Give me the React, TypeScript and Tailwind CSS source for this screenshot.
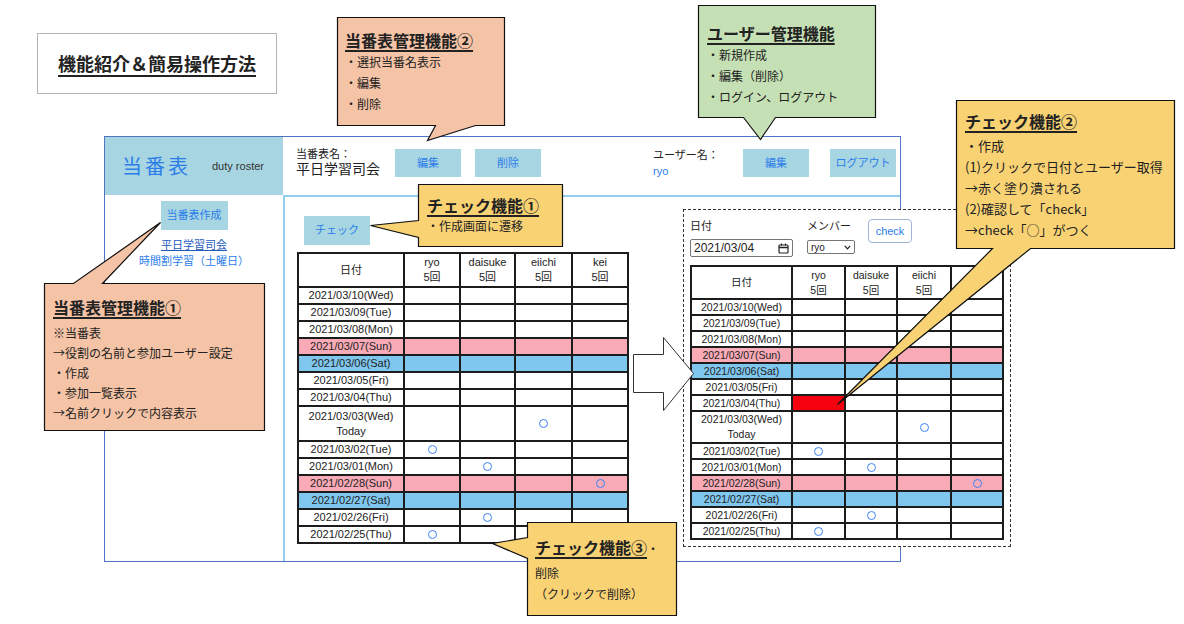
import React from "react";

type Side = "top" | "bottom" | "left";

function Bubble({
  box,
  side,
  base,
  tip,
  fill,
  className,
  children,
}: {
  box: [number, number, number, number];
  side: Side;
  base: [number, number];
  tip: [number, number];
  fill: string;
  className: string;
  children: React.ReactNode;
}) {
  const [x1, y1, x2, y2] = box;
  let d = "";
  if (side === "bottom") {
    d = `M${x1},${y1} L${x2},${y1} L${x2},${y2} L${base[0]},${y2} L${tip[0]},${tip[1]} L${base[1]},${y2} L${x1},${y2} Z`;
  } else if (side === "top") {
    d = `M${x1},${y1} L${base[0]},${y1} L${tip[0]},${tip[1]} L${base[1]},${y1} L${x2},${y1} L${x2},${y2} L${x1},${y2} Z`;
  } else {
    d = `M${x1},${y1} L${x2},${y1} L${x2},${y2} L${x1},${y2} L${x1},${base[0]} L${tip[0]},${tip[1]} L${x1},${base[1]} Z`;
  }
  return (
    <>
      <svg className="absolute left-0 top-0 pointer-events-none" width={1184} height={624}>
        <g transform="translate(0.5,0.5)">
          <path d={d} fill={fill} stroke="#111" strokeWidth={1.2} strokeLinejoin="miter" />
        </g>
      </svg>
      <div className={"absolute text-[#222] " + className}>{children}</div>
    </>
  );
}

type Row = { d: string; c?: "pink" | "blue"; today?: boolean; marks?: number[] };

const rows: Row[] = [
  { d: "2021/03/10(Wed)" },
  { d: "2021/03/09(Tue)" },
  { d: "2021/03/08(Mon)" },
  { d: "2021/03/07(Sun)", c: "pink" },
  { d: "2021/03/06(Sat)", c: "blue" },
  { d: "2021/03/05(Fri)" },
  { d: "2021/03/04(Thu)" },
  { d: "2021/03/03(Wed)", today: true, marks: [2] },
  { d: "2021/03/02(Tue)", marks: [0] },
  { d: "2021/03/01(Mon)", marks: [1] },
  { d: "2021/02/28(Sun)", c: "pink", marks: [3] },
  { d: "2021/02/27(Sat)", c: "blue" },
  { d: "2021/02/26(Fri)", marks: [1] },
  { d: "2021/02/25(Thu)", marks: [0] },
];

function Mark() {
  return <div className="w-[9px] h-[9px] rounded-full border-[1.5px] border-[#3b82f6]" />;
}

function Roster({
  gridCls,
  headH,
  rowH,
  todayH,
  text,
  names,
  redCell,
}: {
  gridCls: string;
  headH: string;
  rowH: string;
  todayH: string;
  text: string;
  names: string[];
  redCell?: boolean;
}) {
  const bgOf = (r: Row) =>
    r.c === "pink" ? "bg-[#f8aab6]" : r.c === "blue" ? "bg-[#80c7ef]" : "bg-white";
  return (
    <div className={"grid w-max bg-[#1c1c1c] p-[2px] gap-[2px] " + gridCls + " " + text}>
      <div className={"bg-white flex items-center justify-center " + headH}>日付</div>
      {names.map((n, i) => (
        <div key={i} className={"bg-white flex flex-col items-center justify-center leading-[15px] " + headH}>
          {n && <span>{n}</span>}
          {n && <span>5回</span>}
        </div>
      ))}
      {rows.map((r, ri) => (
        <React.Fragment key={ri}>
          <div
            className={
              "flex flex-col items-center justify-center leading-[15px] " +
              bgOf(r) +
              " " +
              (r.today ? todayH : rowH)
            }
          >
            <span>{r.d}</span>
            {r.today && <span>Today</span>}
          </div>
          {[0, 1, 2, 3].map((ci) => {
            const red = redCell && ri === 6 && ci === 0;
            return (
              <div
                key={ci}
                className={
                  "flex items-center justify-center " +
                  (red ? "bg-[#f5000f]" : bgOf(r)) +
                  " " +
                  (r.today ? todayH : rowH)
                }
              >
                {r.marks?.includes(ci) && <Mark />}
              </div>
            );
          })}
        </React.Fragment>
      ))}
    </div>
  );
}

const appBtn =
  "bg-[#a8d5e2] text-[#2b7de9] text-[11px] flex items-center justify-center";

export default function App() {
  return (
    <div className="relative w-[1184px] h-[624px] overflow-hidden bg-white text-[#222] font-['Liberation_Sans','Noto_Sans_CJK_JP',sans-serif]">
      {/* Title box */}
      <div className="absolute left-[37px] top-[33px] w-[240px] h-[61px] border border-[#b4b4b4] flex items-center justify-center">
        <span className="text-[18px] font-bold underline decoration-[2px] underline-offset-[4px] font-['Noto_Sans_CJK_JP',sans-serif]">
          機能紹介＆簡易操作方法
        </span>
      </div>

      {/* App mock frame */}
      <div className="absolute left-[104px] top-[136px] w-[797px] h-[426px] border border-[#4f74c4] bg-white flex flex-col">
        <div className="h-[58px] flex shrink-0">
          <div className="w-[178px] bg-[#a8d5e2] flex items-center pl-[17px]">
            <span className="text-[20px] tracking-[3px] text-[#2b7de9] font-['Noto_Sans_CJK_JP',sans-serif]">当番表</span>
            <span className="ml-[21px] text-[11px] text-[#333]">duty roster</span>
          </div>
          <div className="flex-1 flex items-start pl-[13px] pr-[4px]">
            <div className="w-[99px] mt-[10px]">
              <div className="text-[11px] leading-[14px]">当番表名：</div>
              <div className="text-[14px] leading-[16px]">平日学習司会</div>
            </div>
            <div className={appBtn + " w-[66px] h-[28px] mt-[12px]"}>編集</div>
            <div className={appBtn + " w-[66px] h-[28px] mt-[12px] ml-[14px]"}>削除</div>
            <div className="ml-auto w-[90px] mt-[11px]">
              <div className="text-[11px] leading-[14px]">ユーザー名：</div>
              <div className="text-[11px] leading-[14px] mt-[2px] text-[#2b7de9]">ryo</div>
            </div>
            <div className={appBtn + " w-[66px] h-[28px] mt-[12px]"}>編集</div>
            <div className={appBtn + " w-[66px] h-[28px] mt-[12px] ml-[21px]"}>ログアウト</div>
          </div>
        </div>
        <div className="flex-1 flex">
          <div className="w-[178px] flex flex-col items-center">
            <div className={appBtn + " w-[67px] h-[29px] mt-[6px]"}>当番表作成</div>
            <div className="mt-[7px] text-[11px] leading-[16px] text-[#2559b8] underline">平日学習司会</div>
            <div className="text-[11px] leading-[16px] text-[#2b7de9]">時間割学習（土曜日）</div>
          </div>
          <div className="flex-1 border-l-2 border-t-2 border-[#93cdf2] flex flex-col items-start">
            <div className={appBtn + " w-[66px] h-[29px] mt-[19px] ml-[19px]"}>チェック</div>
            <div className="mt-[7px] ml-[12px]">
              <Roster
                gridCls="grid-cols-[104px_54px_53px_55px_54px]"
                headH="h-[32px]"
                rowH="h-[15px]"
                todayH="h-[33px]"
                text="text-[11px]"
                names={["ryo", "daisuke", "eiichi", "kei"]}
              />
            </div>
          </div>
        </div>
      </div>

      {/* Right panel: check screen */}
      <div className="absolute left-[683px] top-[209px] w-[328px] h-[338px] border border-dashed border-[#333] bg-white pl-[6px]">
        <div className="flex items-start">
          <div className="flex flex-col">
            <div className="mt-[9px] text-[11px] leading-[14px]">日付</div>
            <div className="mt-[6px] w-[103px] h-[18px] border border-[#767676] rounded-[2px] flex items-center justify-between px-[3px] text-[12px]">
              <span>2021/03/04</span>
              <svg width="11" height="11" viewBox="0 0 11 11">
                <rect x="1" y="2" width="9" height="8" rx="1" fill="none" stroke="#222" strokeWidth="1.2" />
                <line x1="1" y1="4.5" x2="10" y2="4.5" stroke="#222" strokeWidth="1.5" />
                <line x1="3.5" y1="0.5" x2="3.5" y2="2.5" stroke="#222" strokeWidth="1.2" />
                <line x1="7.5" y1="0.5" x2="7.5" y2="2.5" stroke="#222" strokeWidth="1.2" />
              </svg>
            </div>
          </div>
          <div className="flex flex-col ml-[14px]">
            <div className="mt-[9px] text-[11px] leading-[14px]">メンバー</div>
            <div className="mt-[7px] w-[48px] h-[14px] border border-[#767676] rounded-[2px] flex items-center justify-between px-[3px] text-[10px]">
              <span>ryo</span>
              <svg width="7" height="5" viewBox="0 0 7 5">
                <path d="M0.8 0.8 L3.5 3.8 L6.2 0.8" fill="none" stroke="#222" strokeWidth="1.2" />
              </svg>
            </div>
          </div>
          <div className="ml-[13px] mt-[9px] w-[44px] h-[24px] border border-[#9fb5d6] rounded-[4px] flex items-center justify-center text-[11px] text-[#2b7de9]">
            check
          </div>
        </div>
        <div className="mt-[8px]">
          <Roster
            gridCls="grid-cols-[99px_51px_50px_52px_50px]"
            headH="h-[31px]"
            rowH="h-[14px]"
            todayH="h-[30px]"
            text="text-[10.5px]"
            names={["ryo", "daisuke", "eiichi", ""]}
            redCell
          />
        </div>
      </div>

      {/* Big arrow */}
      <svg className="absolute left-0 top-0 pointer-events-none" width={1184} height={624}>
        <path
          d="M633.5,354.5 L663.5,354.5 L663.5,337.5 L693.5,373.5 L663.5,410.5 L663.5,392.5 L633.5,392.5 Z"
          fill="#fff"
          stroke="#333"
          strokeWidth={1}
        />
      </svg>

      {/* Callouts */}
      <Bubble
        box={[337, 17, 504, 125]}
        side="bottom"
        base={[475, 435]}
        tip={[427, 140]}
        fill="#f5c3a6"
        className="left-[337px] top-[17px] w-[167px] h-[108px] pl-[8px] pt-[12px] font-['Noto_Sans_CJK_JP',sans-serif]"
      >
        <div className="text-[16px] leading-[22px] font-bold underline decoration-[1.5px] underline-offset-[3px]">当番表管理機能②</div>
        <div className="text-[12px] leading-[21px]">・選択当番名表示</div>
        <div className="text-[12px] leading-[21px]">・編集</div>
        <div className="text-[12px] leading-[21px]">・削除</div>
      </Bubble>

      <Bubble
        box={[698, 5, 875, 117]}
        side="bottom"
        base={[775, 743]}
        tip={[760, 139]}
        fill="#c5e0b4"
        className="left-[698px] top-[5px] w-[177px] h-[112px] pl-[9px] pt-[17px] font-['Noto_Sans_CJK_JP',sans-serif]"
      >
        <div className="text-[16px] leading-[22px] font-bold underline decoration-[1.5px] underline-offset-[3px]">ユーザー管理機能</div>
        <div className="text-[12px] leading-[21px]">・新規作成</div>
        <div className="text-[12px] leading-[21px]">・編集（削除）</div>
        <div className="text-[12px] leading-[21px]">・ログイン、ログアウト</div>
      </Bubble>

      <Bubble
        box={[44, 283, 264, 430]}
        side="top"
        base={[73, 102]}
        tip={[160, 222]}
        fill="#f5c3a6"
        className="left-[44px] top-[283px] w-[220px] h-[147px] pl-[9px] pt-[13px] font-['Noto_Sans_CJK_JP',sans-serif]"
      >
        <div className="text-[16px] leading-[22px] font-bold underline decoration-[1.5px] underline-offset-[3px]">当番表管理機能①</div>
        <div className="mt-[5px] text-[12px] leading-[20px]">※当番表</div>
        <div className="text-[12px] leading-[20px]">→役割の名前と参加ユーザー設定</div>
        <div className="text-[12px] leading-[20px]">・作成</div>
        <div className="text-[12px] leading-[20px]">・参加一覧表示</div>
        <div className="text-[12px] leading-[20px]">→名前クリックで内容表示</div>
      </Bubble>

      <Bubble
        box={[418, 184, 562, 246]}
        side="left"
        base={[237, 220]}
        tip={[370, 225]}
        fill="#f9d274"
        className="left-[418px] top-[184px] w-[144px] h-[62px] pl-[9px] pt-[10px] font-['Noto_Sans_CJK_JP',sans-serif]"
      >
        <div className="text-[16px] leading-[22px] font-bold underline decoration-[1.5px] underline-offset-[3px]">チェック機能①</div>
        <div className="text-[12px] leading-[20px]">・作成画面に遷移</div>
      </Bubble>

      <Bubble
        box={[956, 100, 1174, 248]}
        side="bottom"
        base={[1030, 992]}
        tip={[837, 404]}
        fill="#f9d274"
        className="left-[956px] top-[100px] w-[218px] h-[148px] pl-[9px] pt-[10px] font-['Noto_Sans_CJK_JP',sans-serif]"
      >
        <div className="text-[16px] leading-[22px] font-bold underline decoration-[1.5px] underline-offset-[3px]">チェック機能②</div>
        <div className="mt-[3px] text-[13px] leading-[21px]">・作成</div>
        <div className="text-[13px] leading-[21px]">(1)クリックで日付とユーザー取得</div>
        <div className="text-[13px] leading-[21px]">→赤く塗り潰される</div>
        <div className="text-[13px] leading-[21px]">(2)確認して「check」</div>
        <div className="text-[13px] leading-[21px]">→check「○」がつく</div>
      </Bubble>

      <Bubble
        box={[527, 522, 676, 615]}
        side="left"
        base={[558, 537]}
        tip={[492, 543]}
        fill="#f9d274"
        className="left-[527px] top-[522px] w-[149px] h-[93px] pl-[8px] pt-[14px] font-['Noto_Sans_CJK_JP',sans-serif]"
      >
        <div className="text-[16px] leading-[22px]">
          <span className="font-bold underline decoration-[1.5px] underline-offset-[3px]">チェック機能③</span>
          <span className="text-[12px]">・</span>
        </div>
        <div className="mt-[2px] text-[12px] leading-[21px]">削除</div>
        <div className="text-[12px] leading-[21px]">（クリックで削除）</div>
      </Bubble>
    </div>
  );
}
